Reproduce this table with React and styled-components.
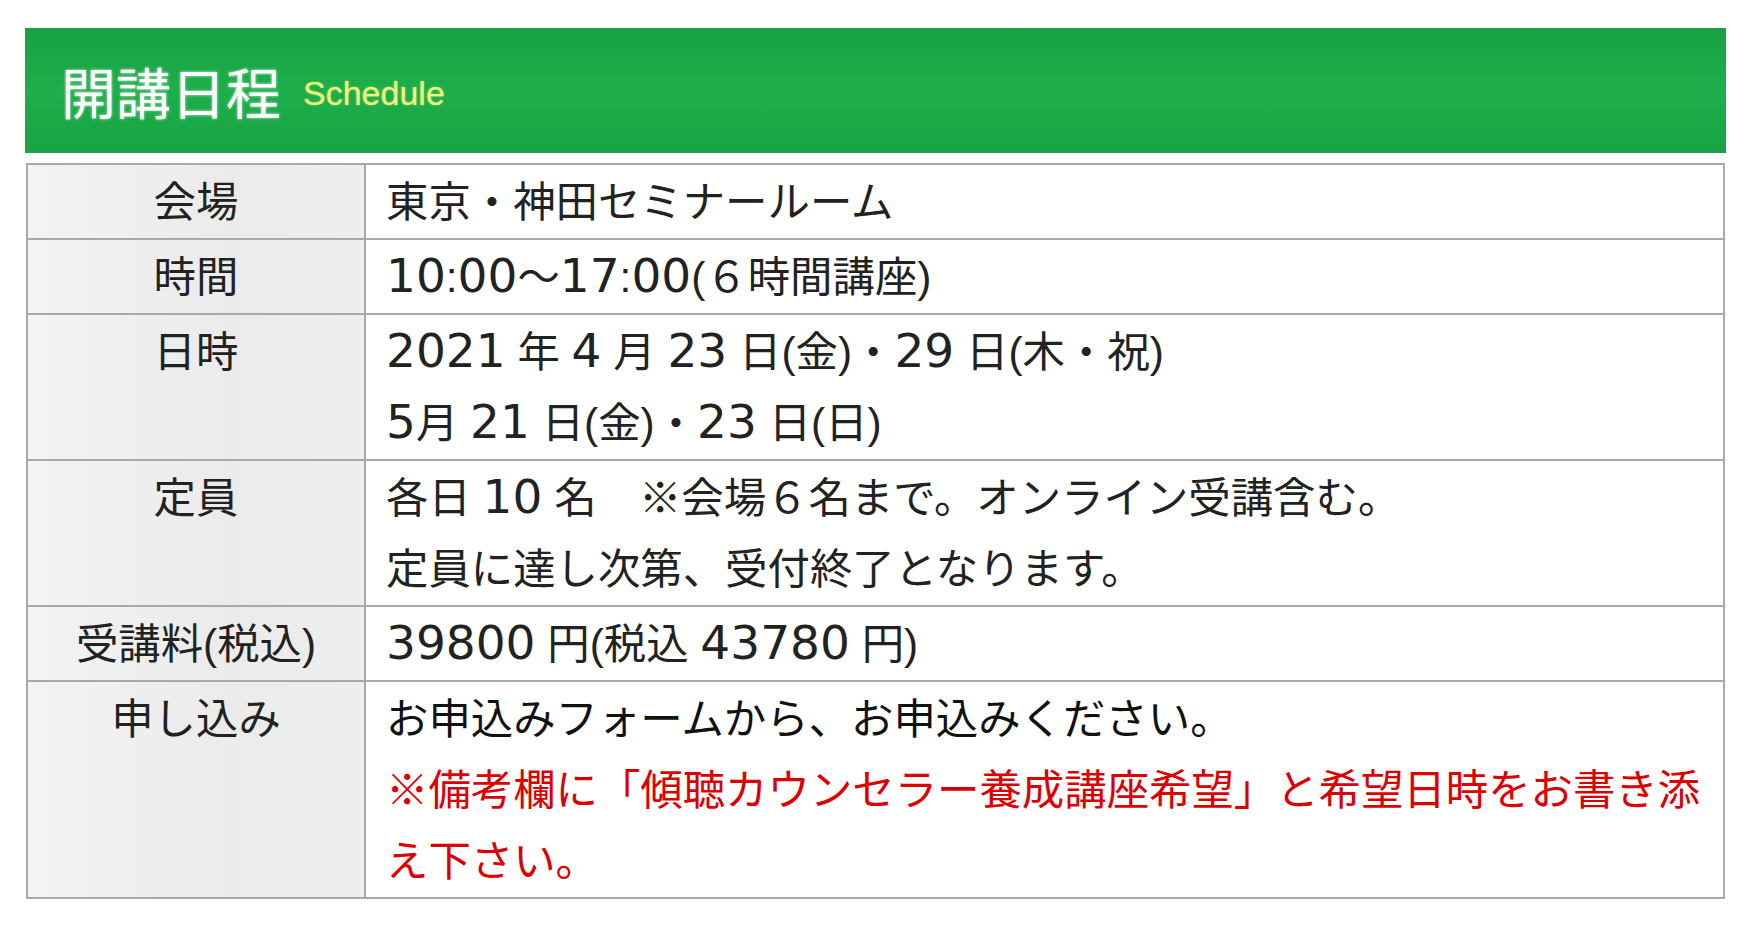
import React from "react";
import styled, { createGlobalStyle } from "styled-components";

const GlobalStyle = createGlobalStyle`
  body {
    margin: 0;
    background: #ffffff;
    font-family: "Liberation Sans", "Noto Sans CJK JP", sans-serif;
  }
`;

const rows = [
  { label: "会場", lines: ["東京・神田セミナールーム"] },
  { label: "時間", lines: ["10:00〜17:00(６時間講座)"] },
  { label: "日時", lines: ["2021 年 4 月 23 日(金)・29 日(木・祝)", "5月 21 日(金)・23 日(日)"] },
  { label: "定員", lines: ["各日 10 名　※会場６名まで。オンライン受講含む。", "定員に達し次第、受付終了となります。"] },
  { label: "受講料(税込)", lines: ["39800 円(税込 43780 円)"] },
];

// digits in the original are wide and tall, so they get their own face
function withNumbers(text) {
  return text.split(/(\d+)/).map((part, i) =>
    /^\d+$/.test(part) ? <Num key={i}>{part}</Num> : part
  );
}

function App() {
  return (
    <>
      <GlobalStyle />
      <Page>
        <Heading>
          <HeadingTitle>開講日程</HeadingTitle>
          <HeadingSub>Schedule</HeadingSub>
        </Heading>
        <Table>
          <tbody>
            {rows.map((row) => (
              <tr key={row.label}>
                <Label>{row.label}</Label>
                <Cell>
                  {row.lines.map((line, i) => (
                    <div key={i}>{withNumbers(line)}</div>
                  ))}
                </Cell>
              </tr>
            ))}
            <tr>
              <Label>申し込み</Label>
              <Cell>
                <Lead>お申込みフォームから、お申込みください。</Lead>
                <Note>※備考欄に「傾聴カウンセラー養成講座希望」と希望日時をお書き添え下さい。</Note>
              </Cell>
            </tr>
          </tbody>
        </Table>
      </Page>
    </>
  );
}

const Page = styled.div`
  padding: 28px 0 0 25px;
  width: 1701px;
`;

const Heading = styled.div`
  height: 125px;
  display: flex;
  align-items: center;
  gap: 22px;
  padding-left: 36px;
  box-sizing: border-box;
  background: linear-gradient(to bottom, #17a244 0%, #1eae4b 50%, #18a445 100%);
  margin-bottom: 10px;
`;

const HeadingTitle = styled.h2`
  margin: 0;
  font-family: "Noto Sans CJK JP", sans-serif;
  font-weight: 400;
  font-size: 55px;
  color: #ffffff;
  text-shadow: 0 0 3px rgba(255, 255, 255, 0.8);
  line-height: 1;
`;

const HeadingSub = styled.span`
  font-family: "Liberation Sans", sans-serif;
  font-size: 34px;
  color: #eef57c;
  text-shadow: 0 0 2px rgba(240, 250, 130, 0.6);
  padding-top: 6px;
`;

const Table = styled.table`
  border-collapse: collapse;
  width: 1699px;
  margin-left: 1px;
  font-size: 42.4px;
  line-height: 71px;
  color: #222222;
`;

const Label = styled.th`
  width: 336px;
  border: 2px solid #a9a9a9;
  background: linear-gradient(to right, #f3f3f3, #ebebeb 60%, #eeeeee);
  font-weight: 400;
  text-align: center;
  vertical-align: top;
  padding: 2px 0 0;
`;

const Cell = styled.td`
  border: 2px solid #a9a9a9;
  background: #ffffff;
  padding: 2px 8px 0 20px;
  vertical-align: top;
`;

const Num = styled.span`
  font-family: "DejaVu Sans", sans-serif;
  font-size: 47px;
  line-height: 1;
`;

const Lead = styled.div`
  color: #111111;
`;

const Note = styled.div`
  color: #dd0000;
`;

export default App;
